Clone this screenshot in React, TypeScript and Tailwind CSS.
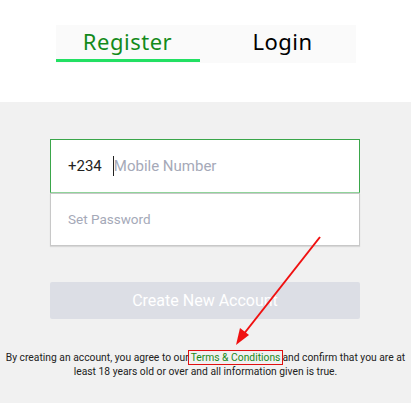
import React from "react";

export default function App() {
  return (
    <div className="w-[411px] h-[403px] overflow-hidden flex flex-col bg-white" style={{ fontFamily: "Lato, 'Noto Sans', sans-serif" }}>
      <div className="h-[102px] bg-white flex justify-center pt-[25px]">
        <div className="w-[300px] h-[38px] bg-[#fafafa] flex">
          <div className="w-[144px] flex flex-col items-center justify-between">
            <span className="text-[22px] leading-[32px] text-[#138a1a] tracking-[0.5px]" style={{ fontFamily: "'Noto Sans', sans-serif" }}>Register</span>
            <div className="w-full h-[3px] bg-[#22e063] mb-[1px]" />
          </div>
          <div className="flex-1 flex justify-center pl-[10px]">
            <span className="text-[22px] leading-[32px] text-black tracking-[0.5px]" style={{ fontFamily: "'Noto Sans', sans-serif" }}>Login</span>
          </div>
        </div>
      </div>
      <div className="relative flex-1 bg-[#f1f1f1] flex flex-col pt-[37px]">
        <div className="w-[310px] ml-[50px] flex flex-col">
          <div className="h-[54px] bg-white border border-[#3aa64a] border-b-[#8fd49a] flex items-center pl-[17px]">
            <span className="text-[15px] text-[#222] font-['Roboto']">+234</span>
            <span className="ml-[11px] w-px h-[20px] bg-[#222]" />
            <span className="text-[15px] text-[#a5a9b8] font-['Roboto']">Mobile Number</span>
          </div>
          <div className="h-[53px] bg-white border border-[#c8c8c8] shadow-[0_1px_1px_rgba(0,0,0,0.1)] flex items-center pl-[17px]">
            <span className="text-[13.5px] text-[#a5a9b8] font-['Roboto']">Set Password</span>
          </div>
          <div className="mt-[36px] h-[37px] rounded-[2px] bg-[#dcdee5] flex items-center justify-center">
            <span className="text-[16px] text-white font-['Roboto']">Create New Account</span>
          </div>
        </div>
        <p className="mt-[32px] text-center text-[10.3px] leading-[14px] text-[#222] font-['Roboto'] whitespace-nowrap">
          By creating an account, you agree to our
          <span className="text-[#1a8a1a] outline outline-1 outline-[#e01010] px-[2px]">Terms &amp; Conditions</span>
          and confirm that you are at
          <br />
          least 18 years old or over and all information given is true.
        </p>
        <svg className="absolute left-0 top-0" width="411" height="301" viewBox="0 102 411 301">
          <line x1="320" y1="237" x2="243" y2="335" stroke="#f01010" strokeWidth="2" />
          <polygon points="236,345 240,328 249,335" fill="#f01010" />
        </svg>
      </div>
    </div>
  );
}
